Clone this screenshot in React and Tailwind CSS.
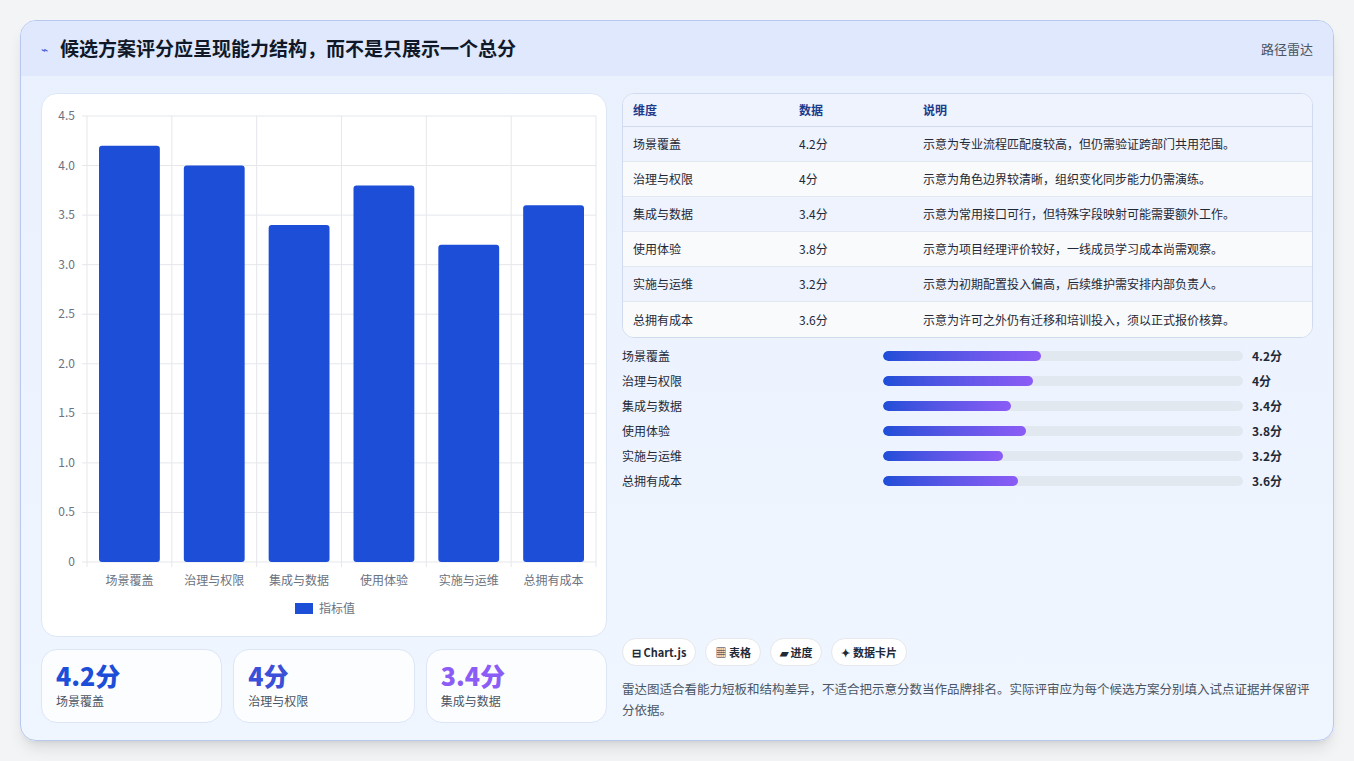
import React from "react";

const data = [
  ["场景覆盖", 4.2, "示意为专业流程匹配度较高，但仍需验证跨部门共用范围。"],
  ["治理与权限", 4, "示意为角色边界较清晰，组织变化同步能力仍需演练。"],
  ["集成与数据", 3.4, "示意为常用接口可行，但特殊字段映射可能需要额外工作。"],
  ["使用体验", 3.8, "示意为项目经理评价较好，一线成员学习成本尚需观察。"],
  ["实施与运维", 3.2, "示意为初期配置投入偏高，后续维护需安排内部负责人。"],
  ["总拥有成本", 3.6, "示意为许可之外仍有迁移和培训投入，须以正式报价核算。"],
];

function Chart() {
  const L = 45, R = 554, T = 22, B = 468;
  const h = B - T;
  const cw = (R - L) / 6;
  const ticks = [0, 0.5, 1, 1.5, 2, 2.5, 3, 3.5, 4, 4.5];
  return (
    <svg width="566" height="543" style={{ fontFamily: "'Noto Sans CJK SC', sans-serif" }}>
      {ticks.map((t) => {
        const y = B - (t / 4.5) * h;
        return (
          <g key={t}>
            <line x1={L - 5} x2={R} y1={y} y2={y} stroke="#e5e7eb" />
            <text x={L - 12} y={y + 4} textAnchor="end" fontSize="12" fill="#6b7280">{t === 0 ? "0" : t.toFixed(1)}</text>
          </g>
        );
      })}
      {Array.from({ length: 7 }).map((_, i) => (
        <line key={i} x1={L + i * cw} x2={L + i * cw} y1={T} y2={B + 5} stroke="#e5e7eb" />
      ))}
      {data.map(([n, v], i) => {
        const bh = (v / 4.5) * h;
        return (
          <g key={n}>
            <rect x={L + i * cw + 12} y={B - bh} width={cw - 24} height={bh} rx="3" fill="#1d4ed8" />
            <text x={L + i * cw + cw / 2} y={B + 23} textAnchor="middle" fontSize="12" fill="#6b7280">{n}</text>
          </g>
        );
      })}
      <rect x="253" y="509" width="18" height="11" fill="#1d4ed8" />
      <text x="277" y="519" fontSize="12" fill="#6b7280">指标值</text>
    </svg>
  );
}

export default function App() {
  return (
    <div className="min-h-screen bg-[#f3f4f6] p-5 pb-5" style={{ fontFamily: "'Noto Sans CJK SC', 'Noto Sans', sans-serif" }}>
      <div className="rounded-2xl border border-[#b9c8ee] bg-gradient-to-b from-[#eaf1fe] to-[#eff6ff] overflow-hidden shadow-lg h-[721px]">
        <div className="h-[55px] bg-[#dfe8fd] flex items-center justify-between px-5">
          <div className="flex items-center gap-3">
            <span className="text-[#3b5bdb] text-xs">⌁</span>
            <h1 className="text-[19px] font-bold text-[#111827]">候选方案评分应呈现能力结构，而不是只展示一个总分</h1>
          </div>
          <span className="text-[13px] text-[#4b5563]">路径雷达</span>
        </div>
        <div className="flex gap-[15px] px-5 pt-[17px]">
          <div className="w-[566px] flex flex-col gap-3">
            <div className="bg-white rounded-2xl border border-[#dde6f6] h-[544px]">
              <Chart />
            </div>
            <div className="grid grid-cols-3 gap-[11px]">
              {[["4.2分", "场景覆盖", "text-[#1d4ed8]"], ["4分", "治理与权限", "text-[#3b4fd8]"], ["3.4分", "集成与数据", "text-[#8b5cf6]"]].map(([v, l, c]) => (
                <div key={l} className="bg-white/80 rounded-2xl border border-[#dde6f6] h-[74px] px-[14px] pt-2">
                  <div className={`text-[25px] font-extrabold leading-[34px] ${c}`}>{v}</div>
                  <div className="text-[12px] text-[#4b5563]">{l}</div>
                </div>
              ))}
            </div>
          </div>
          <div className="flex-1 flex flex-col">
            <div className="rounded-xl border border-[#d1dbef] overflow-hidden bg-white/60">
              <div className="flex h-[33px] items-center bg-[#eef3fd] border-b border-[#d1dbef] text-[12px] font-bold text-[#1e3a8a]">
                <div className="w-[176px] pl-[10px]">维度</div>
                <div className="w-[124px]">数据</div>
                <div>说明</div>
              </div>
              {data.map(([n, v, d], i) => (
                <div key={n} className={`flex h-[35px] items-center text-[12px] text-[#1f2937] ${i < 5 ? "border-b border-[#e2e8f0]" : ""} ${i % 2 ? "bg-[#f8fafc]" : "bg-[#eef3fd]"}`}>
                  <div className="w-[176px] pl-[10px]">{n}</div>
                  <div className="w-[124px]">{v}分</div>
                  <div>{d}</div>
                </div>
              ))}
            </div>
            <div className="flex flex-col gap-[9px] mt-[10px]">
              {data.map(([n, v]) => (
                <div key={n} className="flex items-center h-4 text-[12px] text-[#1f2937]">
                  <div className="w-[261px]">{n}</div>
                  <div className="w-[360px] h-[10px] rounded-full bg-[#e2e8f0] overflow-hidden">
                    <div className="h-full rounded-full bg-gradient-to-r from-[#1d4ed8] to-[#8b5cf6]" style={{ width: `${(v / 9.6) * 100}%` }} />
                  </div>
                  <div className="ml-[9px] font-bold">{v}分</div>
                </div>
              ))}
            </div>
            <div className="flex gap-[9px] mt-[149px]">
              {["⊟ Chart.js", "▦ 表格", "▰ 进度", "✦ 数据卡片"].map((t) => (
                <span key={t} className="bg-white rounded-full border border-[#e5e7eb] h-[28px] px-[9px] flex items-center text-[11px] font-bold text-[#1f2937]">{t}</span>
              ))}
            </div>
            <p className="mt-[12px] text-[12.5px] leading-[21px] text-[#4b5563]">雷达图适合看能力短板和结构差异，不适合把示意分数当作品牌排名。实际评审应为每个候选方案分别填入试点证据并保留评分依据。</p>
          </div>
        </div>
      </div>
    </div>
  );
}
